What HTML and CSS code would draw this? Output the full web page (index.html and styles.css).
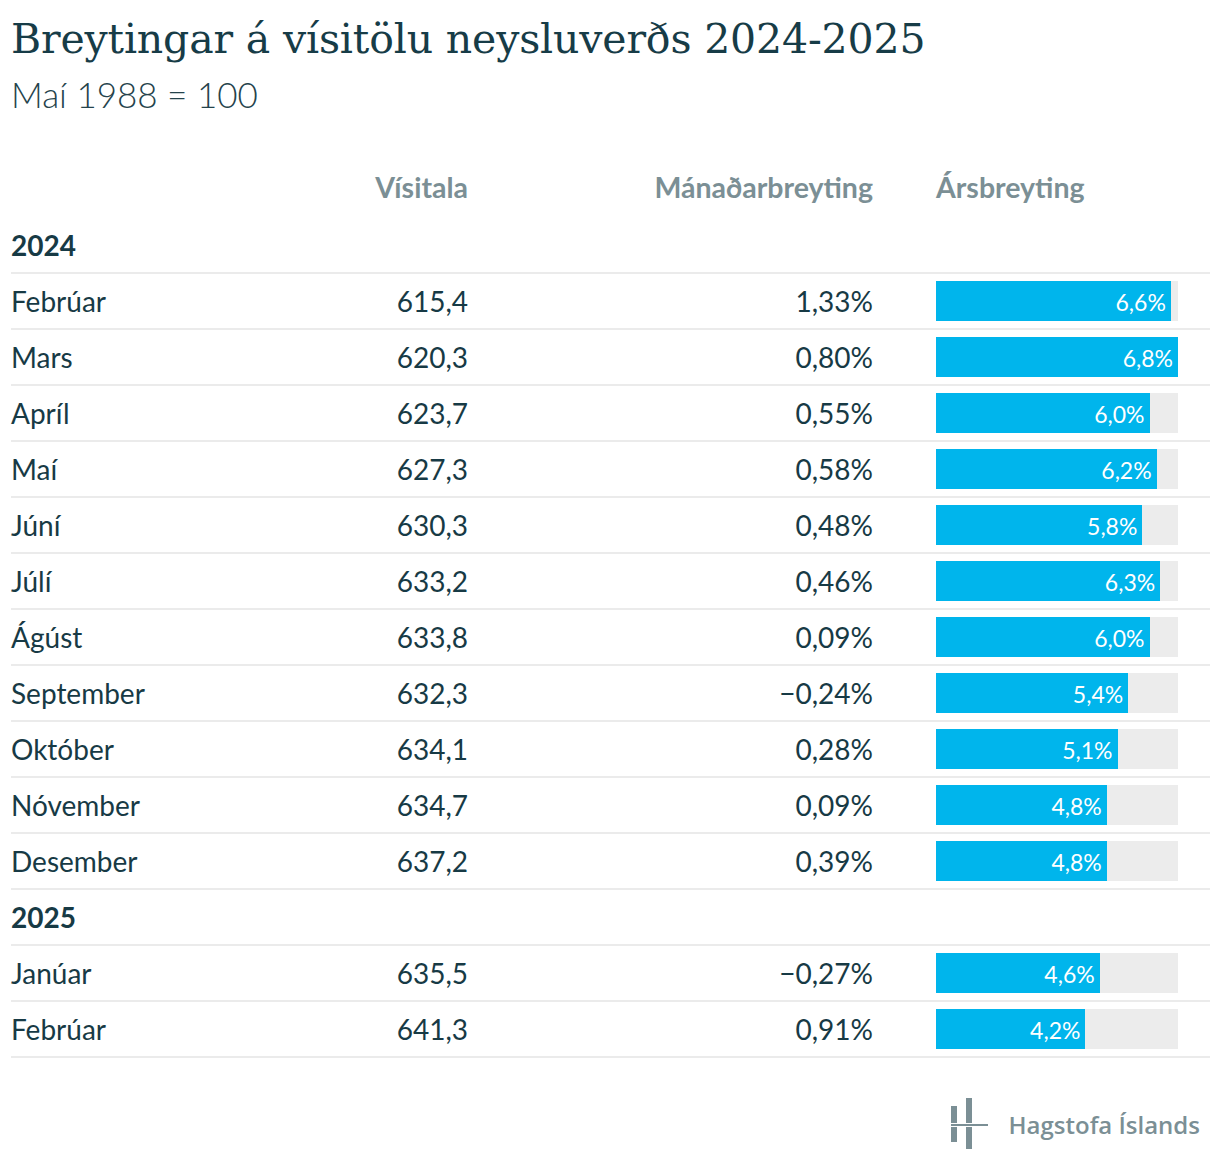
FILE: index.html
```html
<!DOCTYPE html>
<html lang="is">
<head>
<meta charset="utf-8">
<title>Breytingar á vísitölu neysluverðs 2024-2025</title>
<link rel="stylesheet" href="styles.css">
</head>
<body>
<div class="page">
  <header class="head">
    <h1 class="title">Breytingar á vísitölu neysluverðs 2024-2025</h1>
    <p class="subtitle">Maí 1988 = 100</p>
  </header>

  <div class="table">
    <div class="row colhead">
      <div class="c1"></div>
      <div class="c2">Vísitala</div>
      <div class="c3">Mánaðarbreyting</div>
      <div class="c4">Ársbreyting</div>
    </div>

    <div class="row year"><div class="c1">2024</div></div>
    <div class="row"><div class="c1">Febrúar</div><div class="c2">615,4</div><div class="c3">1,33%</div><div class="c4"><div class="track"><div class="bar" style="width:97.06%">6,6%</div></div></div></div>
    <div class="row"><div class="c1">Mars</div><div class="c2">620,3</div><div class="c3">0,80%</div><div class="c4"><div class="track"><div class="bar" style="width:100%">6,8%</div></div></div></div>
    <div class="row"><div class="c1">Apríl</div><div class="c2">623,7</div><div class="c3">0,55%</div><div class="c4"><div class="track"><div class="bar" style="width:88.24%">6,0%</div></div></div></div>
    <div class="row"><div class="c1">Maí</div><div class="c2">627,3</div><div class="c3">0,58%</div><div class="c4"><div class="track"><div class="bar" style="width:91.18%">6,2%</div></div></div></div>
    <div class="row"><div class="c1">Júní</div><div class="c2">630,3</div><div class="c3">0,48%</div><div class="c4"><div class="track"><div class="bar" style="width:85.29%">5,8%</div></div></div></div>
    <div class="row"><div class="c1">Júlí</div><div class="c2">633,2</div><div class="c3">0,46%</div><div class="c4"><div class="track"><div class="bar" style="width:92.65%">6,3%</div></div></div></div>
    <div class="row"><div class="c1">Ágúst</div><div class="c2">633,8</div><div class="c3">0,09%</div><div class="c4"><div class="track"><div class="bar" style="width:88.24%">6,0%</div></div></div></div>
    <div class="row"><div class="c1">September</div><div class="c2">632,3</div><div class="c3">−0,24%</div><div class="c4"><div class="track"><div class="bar" style="width:79.41%">5,4%</div></div></div></div>
    <div class="row"><div class="c1">Október</div><div class="c2">634,1</div><div class="c3">0,28%</div><div class="c4"><div class="track"><div class="bar" style="width:75%">5,1%</div></div></div></div>
    <div class="row"><div class="c1">Nóvember</div><div class="c2">634,7</div><div class="c3">0,09%</div><div class="c4"><div class="track"><div class="bar" style="width:70.59%">4,8%</div></div></div></div>
    <div class="row"><div class="c1">Desember</div><div class="c2">637,2</div><div class="c3">0,39%</div><div class="c4"><div class="track"><div class="bar" style="width:70.59%">4,8%</div></div></div></div>

    <div class="row year"><div class="c1">2025</div></div>
    <div class="row"><div class="c1">Janúar</div><div class="c2">635,5</div><div class="c3">−0,27%</div><div class="c4"><div class="track"><div class="bar" style="width:67.65%">4,6%</div></div></div></div>
    <div class="row"><div class="c1">Febrúar</div><div class="c2">641,3</div><div class="c3">0,91%</div><div class="c4"><div class="track"><div class="bar" style="width:61.76%">4,2%</div></div></div></div>
  </div>

  <footer class="foot">
    <div class="logo">
      <svg class="logo-mark" width="38" height="52" viewBox="0 0 38 52" aria-hidden="true">
        <rect x="1" y="8" width="6" height="17" fill="#7b8f95"/>
        <rect x="1" y="29" width="6" height="15" fill="#7b8f95"/>
        <rect x="16" y="0" width="6" height="25" fill="#7b8f95"/>
        <rect x="16" y="29" width="6" height="22" fill="#7b8f95"/>
        <rect x="1" y="26" width="37" height="2" fill="#7b8f95"/>
      </svg>
      <span class="logo-text">Hagstofa Íslands</span>
    </div>
  </footer>
</div>
</body>
</html>
```

FILE: styles.css
```css
html, body {
  margin: 0;
  padding: 0;
  background: #ffffff;
}

.page {
  width: 1199px;
  padding: 0 10px 0 11px;
  font-family: Lato, "Noto Sans", sans-serif;
  color: #173a45;
}

.head {
  padding-top: 12px;
}

.title {
  margin: 0;
  font-family: "DejaVu Serif", "Liberation Serif", serif;
  font-weight: normal;
  font-size: 41px;
  line-height: 54px;
  color: #173c47;
  letter-spacing: -0.15px;
}

.subtitle {
  margin: 0;
  font-weight: 300;
  font-size: 35px;
  line-height: 56px;
  color: #25434c;
}

.table {
  margin-top: 40px;
}

.row {
  display: grid;
  grid-template-columns: 200px 257px 405px 1fr;
  align-items: center;
  height: 54px;
  border-bottom: 2px solid #ebebeb;
  font-size: 28px;
}

.row.colhead {
  border-bottom: none;
  height: 56px;
  font-weight: 700;
  color: #7b8f95;
  font-size: 28.5px;
}

.row.colhead > div {
  margin-top: -6px;
}

.row.year {
  font-weight: 700;
  color: #173a45;
}

.c2, .c3 {
  text-align: right;
}

.c4 {
  padding-left: 63px;
}

.track {
  width: 242px;
  height: 40px;
  background: #ececec;
  display: flex;
}

.bar {
  height: 40px;
  background: #00b5ec;
  color: #ffffff;
  font-size: 23px;
  line-height: 42px;
  text-align: right;
  padding-right: 5px;
  box-sizing: border-box;
}

.foot {
  display: flex;
  justify-content: flex-end;
  padding-top: 40px;
}

.logo {
  display: flex;
  align-items: center;
  gap: 21px;
}

.logo-mark {
  display: block;
}

.logo-text {
  font-family: "Open Sans", "Noto Sans", sans-serif;
  font-weight: 600;
  font-size: 24px;
  color: #7b8f95;
  padding-right: 10px;
}
```
